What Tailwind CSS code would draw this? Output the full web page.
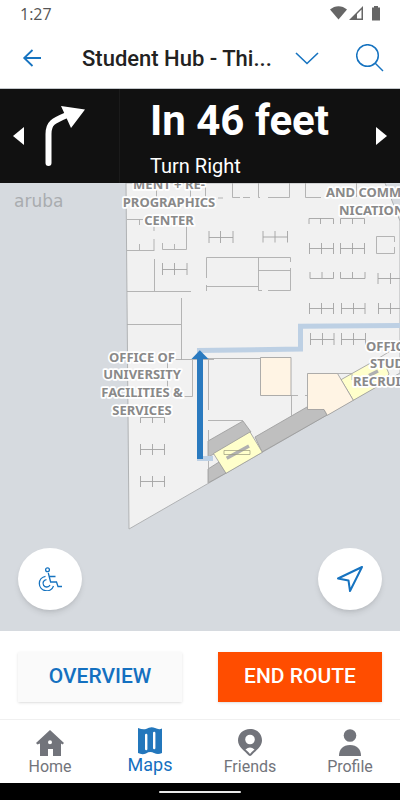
<!DOCTYPE html>
<html lang="en">
<head>
    <meta charset="UTF-8">
    <meta name="viewport" content="width=device-width, initial-scale=1.0">
    <title>Campus Maps - Navigation</title>
    <script src="https://cdn.jsdelivr.net/npm/@tailwindcss/browser@4"></script>
</head>
<body class="min-h-screen flex flex-col bg-white font-[Roboto,sans-serif]">

    <!-- Status bar -->
    <div class="h-7 flex items-center justify-between pl-5 pr-[19px] text-[#555]">
        <span class="font-['Open_Sans',sans-serif] text-[16px]">1:27</span>
        <svg class="w-[51px] h-4" viewBox="0 0 51 16" fill="#666" aria-hidden="true">
            <path d="M0 3.500C5-1 12-1 17 3.500L8.500 13.500Z"/>
            <path d="M33 0V14H19ZM31.500 3.500L27 8V12.500H31.500Z" fill-rule="evenodd"/>
            <path d="M42 1.500h2V0h4v1.500h2v13h-8V1.500z"/>
        </svg>
    </div>

    <!-- Header -->
    <header class="h-[61px] flex items-center pl-[22px] pr-4 border-b border-[#c4c8cc]">
        <button type="button" aria-label="Back">
            <svg class="w-5 h-5" viewBox="0 0 20 20" fill="none" stroke="#1673c0" stroke-width="1.800">
                <path d="M19 10H2M10.500 2L2.200 10l8.300 8"/>
            </svg>
        </button>
        <h1 class="ml-10 flex-1 text-[22px] font-medium text-[#222] whitespace-nowrap">Student Hub - Thi...</h1>
        <button type="button" class="mr-[37px]" aria-label="Change destination">
            <svg class="w-6 h-4" viewBox="0 0 24 16" fill="none" stroke="#1673c0" stroke-width="1.600">
                <path d="M1 3l11 10.500L23 3"/>
            </svg>
        </button>
        <button type="button" aria-label="Search">
            <svg class="w-7 h-7" viewBox="0 0 28 28" fill="none" stroke="#1673c0" stroke-width="1.500">
                <circle cx="11.500" cy="11.500" r="10.800"/>
                <path d="M19 19l8 8"/>
            </svg>
        </button>
    </header>

    <!-- Current instruction -->
    <section class="h-[94px] flex items-center bg-[#111] text-white">
        <div class="w-[120px] h-full flex items-center pl-3 border-r border-[#1b1b1b]">
            <button type="button" aria-label="Previous step">
                <svg class="w-3 h-5" viewBox="0 0 12 20" fill="#fff"><path d="M12 1v18L1 10z"/></svg>
            </button>
            <svg class="ml-5 w-11 h-16" viewBox="0 0 44 64" aria-hidden="true">
                <path d="M4.500 59V30C4.500 19 9 17 23 11" fill="none" stroke="#fff" stroke-width="6" stroke-linecap="round"/>
                <path d="M17 2L41 5.500L27 24L22.500 14Z" fill="#fff"/>
            </svg>
        </div>
        <div class="flex-1 pl-[30px]">
            <p class="pt-0.5 text-[42px] leading-[50px] font-bold">In 46 feet</p>
            <p class="mt-2 text-[20px] leading-6">Turn Right</p>
        </div>
        <button type="button" class="mr-3" aria-label="Next step">
            <svg class="w-3 h-5" viewBox="0 0 12 20" fill="#fff"><path d="M0 1v18l11-9z"/></svg>
        </button>
    </section>

    <!-- Floor map -->
    <main class="relative flex-1 min-h-[320px] overflow-hidden bg-[#d6dadf]">
        <svg class="absolute inset-0 w-full h-full" viewBox="0 183 400 448" preserveAspectRatio="xMidYMid slice" role="img" aria-label="Floor map with route">
            <!-- Building -->
            <path d="M126 183H385L400 221V373L129 529Z" fill="#f1f1f1" stroke="#b0b2b4"/>

            <!-- Rooms -->
            <g stroke="#999" stroke-width=".8">
                <path d="M208 441L243 421L251 432L214 454L208 457Z" fill="#bfbfbf"/>
                <path d="M208 469L219 462L226 473L208 483Z" fill="#bfbfbf"/>
                <path d="M255 437L307 407L324 409L327 415L262 452Z" fill="#bfbfbf"/>
                <path d="M213.500 453.500L250 432L262.300 452.300L226 473.300Z" fill="#ffffcb"/>
                <path d="M341 379.700L376 360L385 364L389 374L380 385L353.300 400.300Z" fill="#ffffcb"/>
                <path d="M260.500 357.500H291V395.500H260.500Z" fill="#fff4e4"/>
                <path d="M307.500 373.500H337.500L353.300 400.300L327.300 415.300L324 409.500H307.500Z" fill="#fff4e4"/>
            </g>

            <!-- Walls -->
            <g fill="none" stroke="#adadad" stroke-width=".9">
                <path d="M127 219.500H143M139.500 219.500V225M154 226V231M154 239V251M127 250.500H154M139.500 244V250"/>
                <path d="M162.500 243V249.500H186.500V226M174.500 244V249M154.500 259V291M127 291.500H191M181.500 298V360M127 324.500H181"/>
                <path d="M156.500 183V197M190.500 183V197M205.500 183V197M218 198H223M232.500 183V197.500H240M243 197.500H250M258.500 183V197.500H260M268 197.500H289.500V183M305.500 183V197.500H321M356.500 183V197"/>
                <path d="M206.500 278V257.500H290.500V262M206.500 285V291M206.500 286.500H258M258.500 257.500V290.500H262M268 290.500H290.500V268M258.500 270.500H290.500"/>
                <path d="M394.500 242V236.500H376.500V253.500H394.500V247"/>
                <path d="M175 359.500H214M167.500 360V387M183 396.500H192.500V359.500M208.500 358V410M208.500 430V483M208 358.500H260M208 420.500H243"/>
                <path d="M291 395.500H298M291.500 395V416M305 395.500H307.500V374M337 373.500H352V380M370 363.500L392 350"/>
            </g>
            <path d="M226.700 458.300L249 446M369 375.500L378 371" stroke="#b0b0b0" stroke-width="3.500"/>
            <path d="M224 450.500H250V454.500H224Z" fill="none" stroke="#9a9a7c" stroke-width=".7"/>

            <!-- Desks -->
            <g fill="none" stroke="#a3a3a3" stroke-width=".9">
                <path d="M162.500 269.500H187M162.500 263V275M174.500 263V275M187 263V275"/>
                <path d="M209 237.500H233M209 231V243M220.500 231V243M233 231V243"/>
                <path d="M263 237H287.500M263 231V242.500M275 231V242.500M287.500 231V242.500"/>
                <path d="M309 224V218.500H333.500V224M320.500 218V224M340.500 224V218.500H364.500V224M352.500 218V224"/>
                <path d="M309.500 248.500H333.500M309.500 243V254M321.500 243V254M333.500 243V254M340.500 248.500H364.500M340.500 243V254M352.500 243V254M364.500 243V254"/>
                <path d="M310 272V278.500H333.500V272M322 272V278M340.500 272V278.500H365V272M352.500 272V278M378 278.500H400M378 273V284M390.500 273V284"/>
                <path d="M309.500 308.500H333.500M309.500 303V314M321.500 303V314M333.500 303V314M341.500 308.500H365M341.500 303V314M353.500 303V314M365 303V314M378.500 308.500H400M378.500 303V314M390.500 303V314"/>
                <path d="M310.500 339.500H334M310.500 333V345M322.500 333V345M334 333V345M341.500 339.500H365.500M341.500 333V345M353.500 333V345M365.500 333V345"/>
                <path d="M140.500 423V417.500H164.500V423M152.500 417V423"/>
                <path d="M140.500 449.500H164.500M140.500 444V455M152.500 444V455M164.500 444V455M140.500 481.500H164.500M140.500 476V487M152.500 476V487M164.500 476V487"/>
            </g>

            <!-- Route -->
            <path d="M197 350.500L300.500 349V326.200L400 325.500M197 458.500H213" fill="none" stroke="#bdd0e4" stroke-width="5"/>
            <path d="M200 459V357" stroke="#2a7abf" stroke-width="6"/>
            <path d="M191.500 359L199.800 350.300L208.500 359Z" fill="#2a7abf"/>

            <!-- Room names -->
            <g class="font-['Noto_Sans','Open_Sans',sans-serif] text-[13px] font-bold" fill="#898989" stroke="#fff" stroke-width="3.500" stroke-linejoin="round" paint-order="stroke">
                <g text-anchor="middle">
                    <text x="169" y="189">MENT + RE-</text>
                    <text x="169" y="207">PROGRAPHICS</text>
                    <text x="169" y="225">CENTER</text>
                    <text x="142" y="362">OFFICE OF</text>
                    <text x="142" y="379">UNIVERSITY</text>
                    <text x="142" y="397">FACILITIES &amp;</text>
                    <text x="142" y="415">SERVICES</text>
                </g>
                <text x="326" y="197">AND COMMU-</text>
                <text x="339" y="215">NICATIONS</text>
                <text x="366" y="351">OFFICE OF</text>
                <text x="370" y="368">STUDENT</text>
                <text x="353" y="386">RECRUITMENT</text>
            </g>
        </svg>

        <span class="absolute left-[14px] top-2 font-['DejaVu_Sans',sans-serif] text-[17px] leading-5 text-[#a9acaf]">aruba</span>

        <button type="button" class="absolute left-[18px] bottom-[21px] w-16 h-[62px] rounded-[50%] bg-white shadow-md flex items-center justify-center" aria-label="Accessible route">
            <svg class="w-6 h-6" viewBox="0 0 24 24" fill="none" stroke="#1673c0" stroke-width="1.300">
                <circle cx="9.500" cy="2.700" r="1.900"/>
                <path d="M10.300 6L12.600 15H18.500L20 19.500H24M11.500 9.500H17.500"/>
                <path d="M7.500 9.300A7.300 7.300 0 1 0 15.500 19"/>
                <path d="M8.500 12.600A3.700 3.700 0 1 0 12 18"/>
            </svg>
        </button>
        <button type="button" class="absolute right-[18px] bottom-[21px] w-16 h-[62px] rounded-[50%] bg-white shadow-md flex items-center justify-center" aria-label="My location">
            <svg class="w-7 h-7" viewBox="0 0 28 28" fill="none" stroke="#1673c0" stroke-width="2" stroke-linejoin="round">
                <path d="M26 2L2 13.500L12.500 15.500L14 26Z"/>
            </svg>
        </button>
    </main>

    <!-- Route actions -->
    <div class="h-[88px] flex items-start gap-9 px-[18px] pt-[21px] text-[21px] font-medium">
        <button type="button" class="flex-1 h-[50px] bg-[#fafafa] text-[#1470c0] shadow">OVERVIEW</button>
        <button type="button" class="flex-1 h-[50px] bg-[#ff4d00] text-white shadow">END ROUTE</button>
    </div>

    <!-- Tab bar -->
    <nav class="h-16 grid grid-cols-4 border-t border-[#f0f0f0] text-[16px] text-[#72747b]">
        <a href="#" class="flex flex-col items-center pt-[9px]">
            <svg class="w-7 h-7" viewBox="0 0 28 28" fill="currentColor" aria-hidden="true">
                <path d="M14 1L28 14L26.500 15.500L25 14.500V27H17V20H12V27H4V14.500L1.500 15.500L0 14ZM14 11.200a2 2 0 1 0 0 4a2 2 0 1 0 0-4Z" fill-rule="evenodd"/>
            </svg>
            <span class="leading-5">Home</span>
        </a>
        <a href="#" class="flex flex-col items-center pt-[7px] text-[18px] text-[#1470c0]" aria-current="page">
            <svg class="w-[26px] h-7" viewBox="0 0 26 28" aria-hidden="true">
                <path d="M1 1Q6 3 9 2Q14-1 18 1Q22 3 25 1.500V26Q21 28 17 26Q13 24 9 26.500Q5 28 1 26Z" fill="#2377bc"/>
                <path d="M9.200 8V22M17.200 6V21" stroke="#fff" stroke-width="2.400" stroke-linecap="round"/>
            </svg>
            <span class="leading-5">Maps</span>
        </a>
        <a href="#" class="flex flex-col items-center pt-[9px]">
            <svg class="w-6 h-7" viewBox="0 0 24 28" aria-hidden="true">
                <path d="M12 0C5 0 0 5 0 11.500C0 18 7 22 10.500 26.300Q12 27.700 13.500 26.300C17 22 24 18 24 11.500C24 5 19 0 12 0Z" fill="currentColor"/>
                <circle cx="12" cy="10.500" r="4.800" fill="#fff"/>
                <path d="M7.500 20.500Q12 16.500 16.500 20.500Q14 22.500 12 25Q10 22.500 7.500 20.500Z" fill="#fff"/>
            </svg>
            <span class="leading-5">Friends</span>
        </a>
        <a href="#" class="flex flex-col items-center pt-[9px]">
            <svg class="w-6 h-7" viewBox="0 0 24 28" fill="currentColor" aria-hidden="true">
                <circle cx="12" cy="6.500" r="6.300"/>
                <path d="M1 27C1 20 5 16 12 16S23 20 23 27Z"/>
            </svg>
            <span class="leading-5">Profile</span>
        </a>
    </nav>

    <!-- System gesture bar -->
    <div class="h-[17px] flex items-center justify-center bg-black">
        <div class="w-[82px] h-[2px] rounded-full bg-[#e8e8e8]"></div>
    </div>

</body>
</html>
